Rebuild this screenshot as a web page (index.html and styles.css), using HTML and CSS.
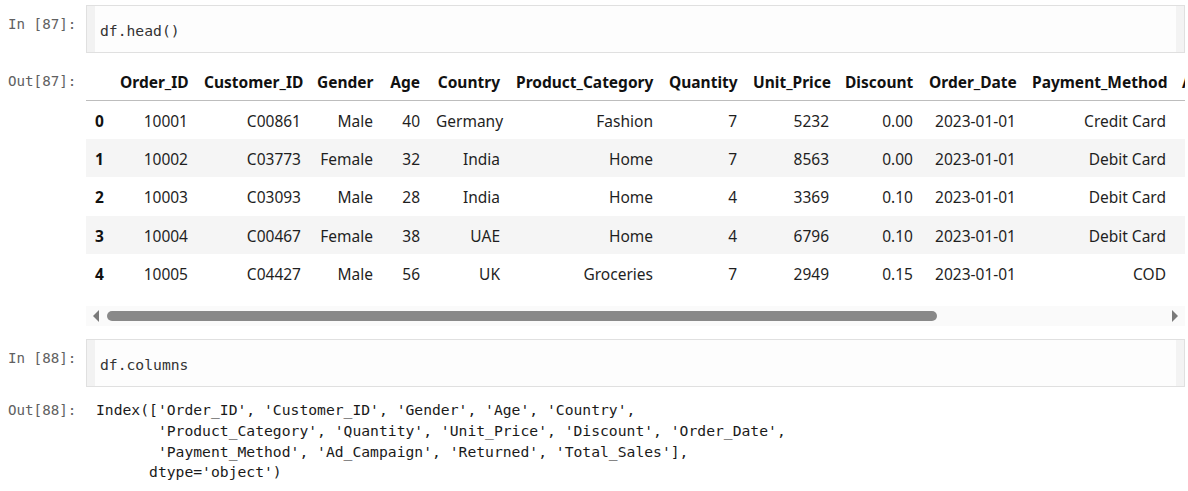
FILE: index.html
```html
<!DOCTYPE html>
<html>
<head>
<meta charset="utf-8">
<link rel="stylesheet" href="styles.css">
</head>
<body>
<div class="nb">
  <div class="cell in-cell first">
    <div class="prompt">In [87]:</div>
    <div class="input">
      <div class="gutter"></div>
      <div class="code">df.head()</div>
      <div class="vstrip"></div>
    </div>
  </div>

  <div class="cell out-cell out-table">
    <div class="prompt out-prompt">Out[87]:</div>
    <div class="output">
      <div class="table-wrap">
        <table class="df">
          <colgroup>
            <col style="width:26px"><col style="width:84px"><col style="width:113px"><col style="width:72px">
            <col style="width:47px"><col style="width:80px"><col style="width:153px"><col style="width:84px">
            <col style="width:92px"><col style="width:84px"><col style="width:103px"><col style="width:150px">
            <col style="width:120px">
          </colgroup>
          <thead>
            <tr><th></th><th>Order_ID</th><th>Customer_ID</th><th>Gender</th><th>Age</th><th>Country</th><th>Product_Category</th><th>Quantity</th><th>Unit_Price</th><th>Discount</th><th>Order_Date</th><th>Payment_Method</th><th class="left">Ad_Campaign</th></tr>
          </thead>
          <tbody>
            <tr><th>0</th><td>10001</td><td>C00861</td><td>Male</td><td>40</td><td>Germany</td><td>Fashion</td><td>7</td><td>5232</td><td>0.00</td><td>2023-01-01</td><td>Credit Card</td><td></td></tr>
            <tr><th>1</th><td>10002</td><td>C03773</td><td>Female</td><td>32</td><td>India</td><td>Home</td><td>7</td><td>8563</td><td>0.00</td><td>2023-01-01</td><td>Debit Card</td><td></td></tr>
            <tr><th>2</th><td>10003</td><td>C03093</td><td>Male</td><td>28</td><td>India</td><td>Home</td><td>4</td><td>3369</td><td>0.10</td><td>2023-01-01</td><td>Debit Card</td><td></td></tr>
            <tr><th>3</th><td>10004</td><td>C00467</td><td>Female</td><td>38</td><td>UAE</td><td>Home</td><td>4</td><td>6796</td><td>0.10</td><td>2023-01-01</td><td>Debit Card</td><td></td></tr>
            <tr><th>4</th><td>10005</td><td>C04427</td><td>Male</td><td>56</td><td>UK</td><td>Groceries</td><td>7</td><td>2949</td><td>0.15</td><td>2023-01-01</td><td>COD</td><td></td></tr>
          </tbody>
        </table>
      </div>
      <div class="hscroll">
        <div class="arrow arrow-left"></div>
        <div class="track"><div class="thumb"></div></div>
        <div class="arrow arrow-right"></div>
      </div>
    </div>
  </div>

  <div class="cell in-cell second">
    <div class="prompt">In [88]:</div>
    <div class="input">
      <div class="gutter"></div>
      <div class="code">df.columns</div>
      <div class="vstrip"></div>
    </div>
  </div>

  <div class="cell out-cell out-text">
    <div class="prompt out-prompt">Out[88]:</div>
    <pre class="pre-out">Index(['Order_ID', 'Customer_ID', 'Gender', 'Age', 'Country',
       'Product_Category', 'Quantity', 'Unit_Price', 'Discount', 'Order_Date',
       'Payment_Method', 'Ad_Campaign', 'Returned', 'Total_Sales'],
      dtype='object')</pre>
  </div>
</div>
</body>
</html>
```

FILE: styles.css
```css
html, body {
  margin: 0;
  padding: 0;
  background: #ffffff;
}

.nb {
  width: 1188px;
  overflow: hidden;
}

.cell {
  display: flex;
  align-items: flex-start;
}

.prompt {
  width: 78px;
  flex: 0 0 78px;
  padding-left: 8px;
  font-family: "DejaVu Sans Mono", "Liberation Mono", monospace;
  font-size: 14.2px;
  line-height: 20px;
  color: #616161;
  white-space: pre;
}

.in-cell.first {
  margin-top: 5px;
}

.in-cell .prompt {
  padding-top: 9px;
}

.input {
  flex: 0 0 1099px;
  width: 1099px;
  height: 48px;
  box-sizing: border-box;
  border: 1px solid #e0e0e0;
  background: #fdfdfd;
  display: flex;
}

.gutter {
  width: 8px;
  flex: 0 0 8px;
  background: #f2f2f2;
}

.code {
  flex: 1;
  padding: 15px 0 0 5px;
  font-family: "DejaVu Sans Mono", "Liberation Mono", monospace;
  font-size: 14.7px;
  line-height: 20px;
  color: #333333;
  white-space: pre;
}

.vstrip {
  width: 8px;
  flex: 0 0 8px;
  background: #f3f3f3;
}

.out-table {
  margin-top: 10px;
}

.out-prompt {
  padding-top: 8px;
}

.output {
  flex: 0 0 1099px;
  width: 1099px;
}

.table-wrap {
  width: 1099px;
  overflow: hidden;
}

.df {
  border-collapse: collapse;
  table-layout: fixed;
  width: 1208px;
  font-family: "Noto Sans", "Open Sans", sans-serif;
  font-size: 15.5px;
  color: #1f1f1f;
}

.df th, .df td {
  padding: 0 8px;
  text-align: right;
  white-space: nowrap;
  overflow: hidden;
}

.df thead th {
  height: 36px;
  font-weight: bold;
  color: #111111;
  border-bottom: 1px solid #bdbdbd;
  vertical-align: middle;
  padding-top: 1px;
}

.df tbody tr {
  height: 38.4px;
}

.df tbody td, .df tbody th {
  padding-top: 2px;
}

.df tbody th {
  text-align: left;
  padding-left: 9px;
  font-weight: bold;
  color: #111111;
}

.df tbody tr:nth-child(even) {
  background: #f5f5f5;
}

.df .left {
  text-align: left;
}

.hscroll {
  margin-top: 14px;
  height: 20px;
  width: 1099px;
  background: #fafafa;
  display: flex;
  align-items: center;
}

.arrow {
  width: 0;
  height: 0;
  border-top: 6px solid transparent;
  border-bottom: 6px solid transparent;
}

.arrow-left {
  margin-left: 7px;
  border-right: 6px solid #7a7a7a;
}

.arrow-right {
  margin-right: 7px;
  border-left: 6px solid #7a7a7a;
}

.track {
  flex: 1;
  height: 10px;
  padding: 0 8px;
}

.thumb {
  width: 830px;
  height: 10px;
  border-radius: 5px;
  background: #898989;
}

.in-cell.second {
  margin-top: 13px;
}

.out-text {
  margin-top: 13px;
}

.out-text .out-prompt {
  padding-top: 0;
}

.pre-out {
  margin: 0;
  padding-left: 10px;
  font-family: "DejaVu Sans Mono", "Liberation Mono", monospace;
  font-size: 14.7px;
  line-height: 20.6px;
  color: #1a1a1a;
}
```
